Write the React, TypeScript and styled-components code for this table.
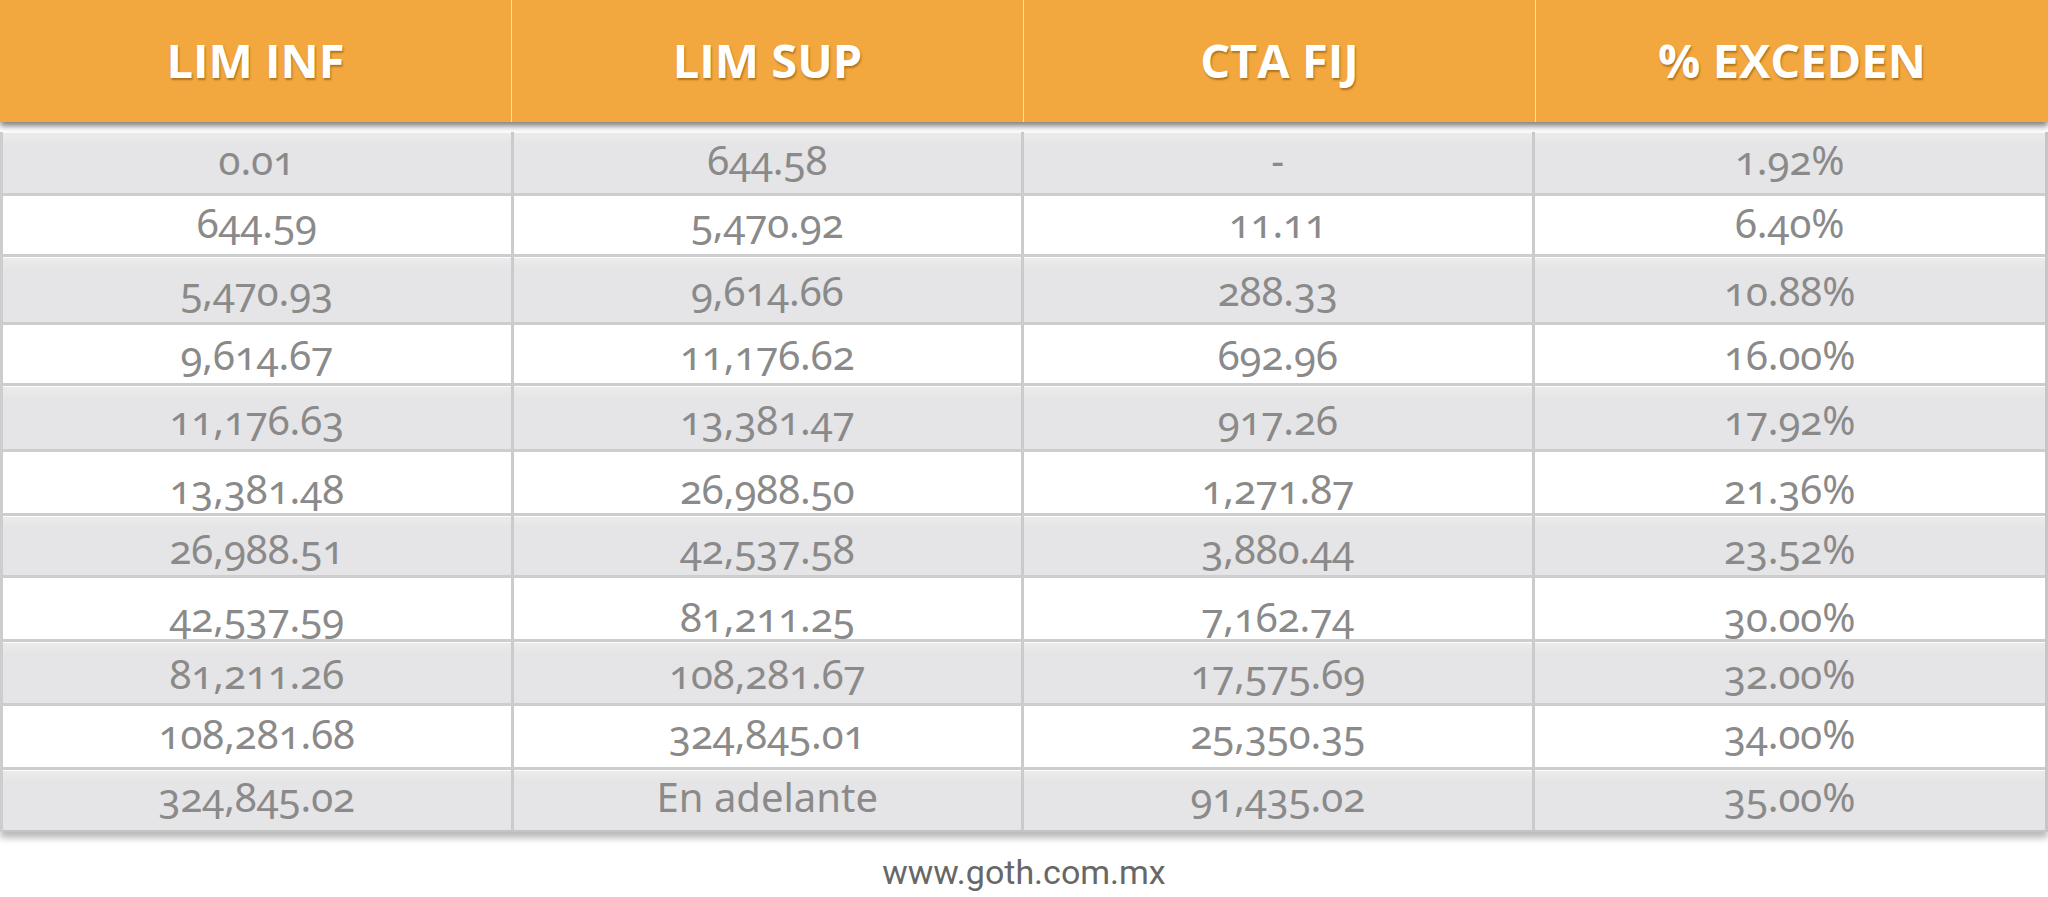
import React from 'react';
import styled, { createGlobalStyle } from 'styled-components';

const GlobalStyle = createGlobalStyle`
  html, body {
    margin: 0;
    padding: 0;
    background: #ffffff;
  }
  body {
    width: 2048px;
    height: 897px;
    overflow: hidden;
  }
`;

const Page = styled.div`
  width: 2048px;
  height: 897px;
  display: flex;
  flex-direction: column;
  background: #ffffff;
`;

const Table = styled.div`
  display: flex;
  flex-direction: column;
`;

const HeaderRow = styled.div`
  position: relative;
  z-index: 1;
  height: 122px;
  display: grid;
  grid-template-columns: repeat(4, 1fr);
  background: #f2a83e;
  box-shadow: 0 4px 6px rgba(0, 0, 0, 0.5);
`;

const HeaderCell = styled.div`
  display: flex;
  align-items: center;
  justify-content: center;
  border-right: 1px solid rgba(255, 236, 205, 0.8);
  font-family: 'Open Sans', 'Liberation Sans', sans-serif;
  font-weight: 700;
  font-size: 47px;
  color: #ffffff;
  text-shadow: 1px 2px 2px rgba(120, 70, 0, 0.55);
  padding-bottom: 2px;

  &:last-child {
    border-right: none;
  }
`;

const Body = styled.div`
  margin-top: 10px;
  display: flex;
  flex-direction: column;
  border-left: 3px solid #cdcdcd;
  border-right: 3px solid #c6c6c6;
  box-shadow: 0 6px 7px rgba(0, 0, 0, 0.28);
`;

const Row = styled.div<{ $shade: boolean; $h: number }>`
  height: ${(p) => p.$h}px;
  box-sizing: border-box;
  display: grid;
  grid-template-columns: repeat(4, 1fr);
  background: ${(p) => (p.$shade ? 'linear-gradient(#ececed, #e5e4e6 20%)' : '#ffffff')};
  border-bottom: 3px solid #cdcdcd;
  box-shadow: inset 0 1px 0 rgba(255, 255, 255, 0.9);

  &:last-child {
    border-bottom: 2px solid #c4c4c4;
  }
`;

const Cell = styled.div`
  display: flex;
  align-items: center;
  justify-content: center;
  border-right: 3px solid #cbcbcb;

  &:last-child {
    border-right: none;
  }
`;

const Value = styled.span<{ $shift: number }>`
  display: block;
  transform: translateY(${(p) => p.$shift - 3}px);
  font-family: 'Noto Sans', 'Open Sans', sans-serif;
  font-feature-settings: 'onum' 1;
  font-variant-numeric: oldstyle-nums;
  font-size: 40px;
  line-height: 1.25;
  color: #8a8a8a;
  white-space: nowrap;
`;

const Footer = styled.div`
  padding-top: 20px;
  text-align: center;
  font-family: Roboto, 'Liberation Sans', sans-serif;
  font-size: 34px;
  line-height: 40px;
  color: #676767;
`;

const headers = ['LIM INF', 'LIM SUP', 'CTA FIJ', '% EXCEDEN'];

const rows: { cells: string[]; h: number; shift: number }[] = [
  { cells: ['0.01', '644.58', '-', '1.92%'], h: 64, shift: 0 },
  { cells: ['644.59', '5,470.92', '11.11', '6.40%'], h: 61, shift: 1 },
  { cells: ['5,470.93', '9,614.66', '288.33', '10.88%'], h: 68, shift: 4 },
  { cells: ['9,614.67', '11,176.62', '692.96', '16.00%'], h: 61, shift: 4 },
  { cells: ['11,176.63', '13,381.47', '917.26', '17.92%'], h: 66, shift: 5 },
  { cells: ['13,381.48', '26,988.50', '1,271.87', '21.36%'], h: 64, shift: 9 },
  { cells: ['26,988.51', '42,537.58', '3,880.44', '23.52%'], h: 62, shift: 6 },
  { cells: ['42,537.59', '81,211.25', '7,162.74', '30.00%'], h: 64, shift: 11 },
  { cells: ['81,211.26', '108,281.67', '17,575.69', '32.00%'], h: 64, shift: 4 },
  { cells: ['108,281.68', '324,845.01', '25,350.35', '34.00%'], h: 64, shift: 0 },
  { cells: ['324,845.02', 'En adelante', '91,435.02', '35.00%'], h: 62, shift: 0 },
];

export default function App() {
  return (
    <Page>
      <GlobalStyle />
      <Table>
        <HeaderRow>
          {headers.map((h) => (
            <HeaderCell key={h}>{h}</HeaderCell>
          ))}
        </HeaderRow>
        <Body>
          {rows.map((r, i) => (
            <Row key={i} $shade={i % 2 === 0} $h={r.h}>
              {r.cells.map((c, j) => (
                <Cell key={j}>
                  <Value $shift={r.shift}>{c}</Value>
                </Cell>
              ))}
            </Row>
          ))}
        </Body>
      </Table>
      <Footer>www.goth.com.mx</Footer>
    </Page>
  );
}
